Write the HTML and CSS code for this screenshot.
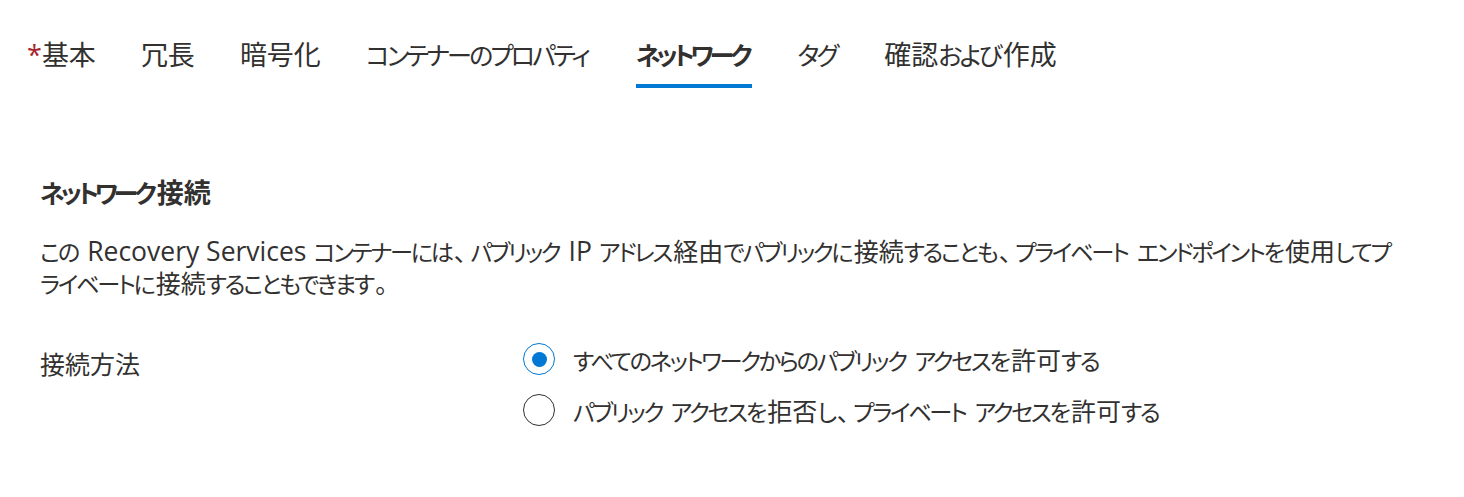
FILE: index.html
```html
<!DOCTYPE html>
<html lang="ja">
<head>
<meta charset="utf-8">
<title>Recovery Services コンテナー - ネットワーク</title>
<link rel="stylesheet" href="styles.css">
</head>
<body>
<div class="page">
  <nav class="tabs">
    <div class="tab"><span class="req">*</span>基本</div>
    <div class="tab">冗長</div>
    <div class="tab">暗号化</div>
    <div class="tab"><span class="k">コンテナーのプロパティ</span></div>
    <div class="tab active"><span class="k">ネットワーク</span></div>
    <div class="tab"><span class="k">タグ</span></div>
    <div class="tab">確認<span class="k">および</span>作成</div>
  </nav>
  <section class="content">
    <h2 class="heading"><span class="k">ネットワーク</span>接続</h2>
    <p class="desc"><span class="k">この</span> <span class="lat">Recovery Services</span> <span class="k">コンテナーには</span><span class="p">、</span><span class="k">パブリック</span> <span class="lat">IP</span> <span class="k">アドレス</span>経由<span class="k">でパブリックに</span>接続<span class="k">することも</span><span class="p">、</span><span class="k">プライベート</span> <span class="k">エンドポイントを</span>使用<span class="k">してプ</span><span class="k">ライベートに</span>接続<span class="k">することもできます</span><span class="p">。</span></p>
    <div class="field">
      <div class="label">接続方法</div>
      <div class="options">
        <label class="option">
          <span class="radio checked"><span class="dot"></span></span>
          <span class="option-text"><span class="k">すべてのネットワークからのパブリック</span> <span class="k">アクセスを</span>許可<span class="k">する</span></span>
        </label>
        <label class="option">
          <span class="radio"></span>
          <span class="option-text"><span class="k">パブリック</span> <span class="k">アクセスを</span>拒否<span class="k">し</span><span class="p">、</span><span class="k">プライベート</span> <span class="k">アクセスを</span>許可<span class="k">する</span></span>
        </label>
      </div>
    </div>
  </section>
</div>
</body>
</html>
```
FILE: styles.css
```css
html, body {
  margin: 0;
  padding: 0;
  background: #ffffff;
}
body {
  font-family: "Open Sans", "Noto Sans CJK JP", sans-serif;
  color: #323130;
  font-feature-settings: "palt";
}
.page {
  width: 1464px;
  height: 497px;
  overflow: hidden;
}
/* kana runs: the reference UI font has condensed kana */
.k {
  font-size: 0.93em;
  letter-spacing: -0.1em;
  padding-right: 0.1em;
}
/* ideographic comma / full stop: a little wider than proportional */
.p {
  padding-right: 0.15em;
}
.lat {
  font-family: "Open Sans", sans-serif;
  font-size: 26.5px;
}
.tabs {
  display: flex;
  gap: 45px;
  padding: 37px 0 0 27px;
}
.tab {
  font-size: 27px;
  line-height: 36px;
  padding-bottom: 11px;
  border-bottom: 4px solid transparent;
  white-space: nowrap;
}
.tab .k {
  letter-spacing: -0.115em;
  padding-right: 0.115em;
}
.tab.active {
  font-weight: 700;
  border-bottom-color: #0078d4;
}
.tab.active .k,
.heading .k {
  letter-spacing: -0.165em;
  padding-right: 0.165em;
}
.req {
  color: #a4262c;
}
.content {
  padding-left: 40px;
}
.heading {
  margin: 87px 0 0;
  font-size: 27px;
  line-height: 36px;
  font-weight: 700;
}
.desc {
  margin: 25px 0 0;
  font-family: "Liberation Sans", "Noto Sans CJK JP", sans-serif;
  font-size: 25px;
  line-height: 31px;
  width: 1358px;
}
.field {
  display: flex;
  margin-top: 40px;
}
.label {
  width: 483px;
  font-size: 25px;
  line-height: 36px;
  padding-top: 5px;
}
.options {
  display: flex;
  flex-direction: column;
  gap: 15px;
}
.option {
  display: flex;
  align-items: center;
  gap: 18px;
  height: 36px;
  font-size: 25px;
}
.radio {
  width: 32px;
  height: 32px;
  box-sizing: border-box;
  border: 1px solid #323130;
  border-radius: 50%;
  display: flex;
  align-items: center;
  justify-content: center;
  flex: none;
}
.radio.checked {
  border-color: #0078d4;
}
.dot {
  width: 15px;
  height: 15px;
  border-radius: 50%;
  background: #0078d4;
}
```
